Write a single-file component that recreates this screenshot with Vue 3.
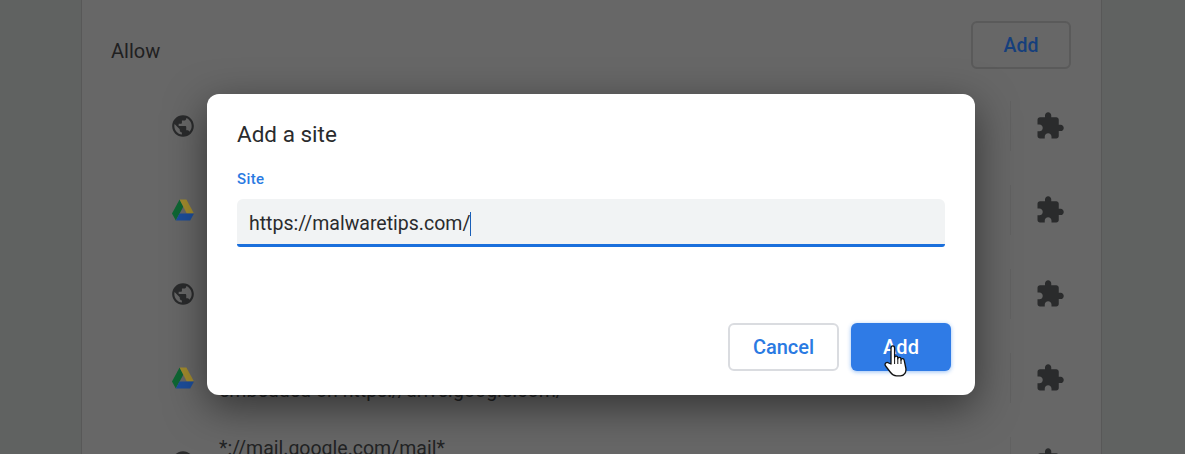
<script setup>
const rows = [
  { icon: "globe", lines: [] },
  { icon: "drive", lines: [] },
  { icon: "globe", lines: [] },
  { icon: "drive", lines: ["", "embedded on https://drive.google.com/"] },
  { icon: "globe", lines: ["*://mail.google.com/mail*", ""] },
];
</script>

<template>
  <div class="page">
    <div class="card">
      <div class="card-head">
        <h2 class="section-title">Allow</h2>
        <button type="button" class="btn-outline">Add</button>
      </div>
      <div v-for="(row, i) in rows" :key="i" class="row">
        <svg v-if="row.icon == 'globe'" class="site-icon" viewBox="0 0 24 24">
          <path fill="#2a2b2c" d="M12 2C6.48 2 2 6.48 2 12s4.48 10 10 10 10-4.48 10-10S17.52 2 12 2zm-1 17.93c-3.95-.49-7-3.85-7-7.93 0-.62.08-1.21.21-1.79L9 15v1c0 1.1.9 2 2 2v1.93zm6.9-2.54c-.26-.81-1-1.39-1.9-1.39h-1v-3c0-.55-.45-1-1-1H8v-2h2c.55 0 1-.45 1-1V7h2c1.1 0 2-.9 2-2v-.41c2.93 1.19 5 4.06 5 7.41 0 2.08-.8 3.97-2.1 5.39z" />
        </svg>
        <svg v-else class="site-icon" viewBox="0 0 26 26">
          <path fill="#0e6633" d="M9.6 2.5 2 16.5 5.8 23.5 13.4 9.5z" />
          <path fill="#a28b2d" d="M9.6 2.5h6.8L24 16.5h-7.2z" />
          <path fill="#1c4d9a" d="M9.4 16.5H24l-3.8 7H5.8z" />
        </svg>
        <div class="site-text">
          <div v-for="(line, j) in row.lines" :key="j" class="site-line">{{ line }}</div>
        </div>
        <div class="row-end">
          <svg class="puzzle" viewBox="0 0 24 24">
            <path fill="#2a2b2c" d="M20.5 11H19V7c0-1.1-.9-2-2-2h-4V3.5C13 2.12 11.88 1 10.5 1S8 2.12 8 3.5V5H4c-1.1 0-1.99.9-1.99 2v3.8H3.5c1.49 0 2.7 1.21 2.7 2.7s-1.21 2.7-2.7 2.7H2V20c0 1.1.9 2 2 2h3.8v-1.5c0-1.49 1.21-2.7 2.7-2.7 1.49 0 2.7 1.21 2.7 2.7V22H17c1.1 0 2-.9 2-2v-4h1.5c1.38 0 2.5-1.12 2.5-2.5S21.88 11 20.5 11z" />
          </svg>
        </div>
      </div>
    </div>

    <div class="dialog" role="dialog">
      <h1 class="dialog-title">Add a site</h1>
      <label class="field-label">Site</label>
      <div class="field">
        <span>https://malwaretips.com/</span><span class="caret"></span>
      </div>
      <div class="dialog-actions">
        <button type="button" class="btn btn-cancel">Cancel</button>
        <button type="button" class="btn btn-add">Add</button>
      </div>
    </div>

    <svg class="hand" viewBox="0 0 24 34">
      <path fill="#fff" stroke="#111" stroke-width="1.3" stroke-linejoin="round" d="M7 21V5.2C7 2.2 10.6 2.2 10.6 5.2V14.5C10.6 12.6 13.8 12.6 13.8 14.7V15.8C13.8 13.9 17 13.9 17 16V17C17 15.2 20 15.2 20.2 17.3L21.8 25C22.5 29 20.6 32.8 16.5 32.8H12.5C9.8 32.8 8 31.5 6.2 29L1.6 23C0 20.6 2.6 18.4 4.6 20Z" />
      <path fill="none" stroke="#111" stroke-width="1" d="M10.6 14.5V21M13.8 15.5V21M17 16.6V21" />
    </svg>
  </div>
</template>

<style scoped>
.page {
  position: relative;
  height: 454px;
  overflow: hidden;
  background: #606261;
  font-family: Roboto, "Liberation Sans", sans-serif;
}

.card {
  width: 1019px;
  height: 100%;
  margin-left: 81px;
  background: #676767;
  border-left: 1px solid #585858;
  border-right: 1px solid #585858;
}

.card-head {
  display: flex;
  justify-content: space-between;
  align-items: flex-start;
  height: 84px;
  padding: 21px 30px 0 29px;
  box-sizing: border-box;
}

.section-title {
  margin: 0;
  padding-top: 18px;
  font-size: 20px;
  line-height: 24px;
  font-weight: 400;
  color: #1f2021;
}

.btn-outline {
  width: 100px;
  height: 48px;
  padding: 0;
  border: 2px solid #5a5a5a;
  border-radius: 6px;
  background: transparent;
  color: #163f7c;
  font: 500 19.5px Roboto, sans-serif;
}

.row {
  display: flex;
  align-items: center;
  height: 84px;
  padding-left: 88px;
}

.site-icon {
  flex: none;
  width: 26px;
  height: 26px;
}

.site-text {
  flex: 1;
  margin-left: 23px;
  font-size: 19.5px;
  color: #222324;
}

.site-line {
  height: 26px;
  line-height: 26px;
}

.row-end {
  display: flex;
  align-items: center;
  width: 90px;
  height: 50px;
  margin-right: 1px;
  box-sizing: border-box;
  border-left: 1px solid #616161;
  padding-left: 24px;
}

.puzzle {
  width: 30px;
  height: 30px;
}

.dialog {
  position: absolute;
  left: 207px;
  top: 94px;
  width: 768px;
  height: 301px;
  box-sizing: border-box;
  padding: 24px 24px 24px 30px;
  display: flex;
  flex-direction: column;
  background: #fff;
  border-radius: 12px;
  box-shadow: 0 12px 40px rgba(0, 0, 0, 0.5);
}

.dialog-title {
  margin: 0;
  font-size: 22.5px;
  line-height: 32px;
  font-weight: 400;
  color: #2a2b2d;
}

.field-label {
  margin-top: 19px;
  font-size: 15px;
  line-height: 20px;
  font-weight: 500;
  letter-spacing: 0.4px;
  color: #2a7ae2;
}

.field {
  display: flex;
  align-items: center;
  width: 708px;
  height: 48px;
  margin-top: 10px;
  padding: 4px 12px 0;
  box-sizing: border-box;
  background: #f1f3f4;
  border-bottom: 3px solid #1a6fdc;
  border-radius: 6px 6px 3px 3px;
  font-size: 19.5px;
  color: #2a2b2d;
}

.caret {
  width: 1px;
  height: 24px;
  background: #1a5fb8;
}

.dialog-actions {
  display: flex;
  justify-content: flex-end;
  gap: 12px;
  margin-top: auto;
}

.btn {
  height: 48px;
  padding: 0;
  border-radius: 6px;
  font: 500 20px Roboto, sans-serif;
}

.btn-cancel {
  width: 111px;
  background: #fff;
  border: 2px solid #dadce0;
  color: #2a7ae2;
}

.btn-add {
  width: 100px;
  background: #2f7be6;
  border: none;
  color: #fff;
  box-shadow: 0 1px 4px rgba(26, 115, 232, 0.45);
}

.hand {
  position: absolute;
  left: 884px;
  top: 343px;
  width: 24px;
  height: 34px;
}
</style>

<style>
html,
body {
  margin: 0;
}
</style>
